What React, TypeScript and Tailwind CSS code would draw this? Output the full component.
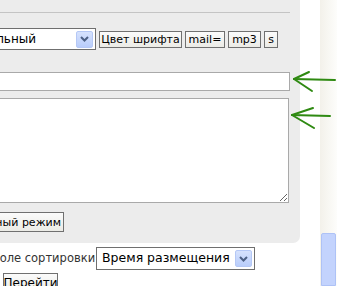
function DropArrow() {
  return (
    <div className="w-[17px] h-[17px] shrink-0 rounded-[2px] bg-gradient-to-b from-[#d6e2fd] to-[#b9cdfb] border border-[#b5c8f6] flex items-center justify-center">
      <svg width="9" height="6" viewBox="0 0 9 6">
        <path d="M1 1 L4.5 4.5 L8 1" fill="none" stroke="#4d6185" strokeWidth="2" />
      </svg>
    </div>
  );
}

function SmallButton({ label, w }: { label: string; w: string }) {
  return (
    <div
      className={`${w} h-[17px] shrink-0 border border-[#707070] bg-gradient-to-b from-[#fbfbfb] to-[#ebebe6] flex items-center justify-center text-[11px] leading-none text-black whitespace-nowrap`}
    >
      {label}
    </div>
  );
}

function Arrow({ tipX, tipY, endX, up, down }: { tipX: number; tipY: number; endX: number; up: [number, number]; down: [number, number] }) {
  return (
    <g stroke="#2f8a12" strokeWidth="2" fill="none" strokeLinecap="round">
      <path d={`M${endX} ${tipY + 1} L${tipX} ${tipY}`} />
      <path d={`M${tipX} ${tipY} L${up[0]} ${up[1]}`} />
      <path d={`M${tipX} ${tipY} L${down[0]} ${down[1]}`} />
    </g>
  );
}

export default function App() {
  return (
    <div className="relative w-[337px] h-[286px] overflow-hidden bg-white flex font-['DejaVu_Sans',Verdana,sans-serif] text-black">
      <div className="w-[320px] flex flex-col">
        <div className="w-[300px] h-[243px] bg-[#ececec] rounded-br-[7px] flex flex-col shrink-0">
          <div className="mt-[12px] w-[290px] h-px bg-[#c4c4c4]" />

          <div className="mt-[15px] flex items-start h-[22px]">
            <div className="ml-[-60px] w-[156px] h-[22px] shrink-0 border border-[#6f6f6f] bg-white flex items-center pr-[2px]">
              <span className="flex-1 text-right pr-[40px] text-[12px] leading-none whitespace-nowrap">Нормальный</span>
              <DropArrow />
            </div>
            <div className="ml-[3px] mt-[3px] flex gap-[3px]">
              <SmallButton label="Цвет шрифта" w="w-[83px]" />
              <SmallButton label="mail=" w="w-[40px]" />
              <SmallButton label="mp3" w="w-[33px]" />
              <SmallButton label="s" w="w-[14px]" />
            </div>
          </div>

          <div className="mt-[22px] ml-[-10px] w-[300px] h-[19px] border border-[#a9a9a9] bg-white shrink-0" />

          <textarea className="mt-[7px] ml-[-10px] w-[299px] h-[105px] border border-[#a9a9a9] bg-white shrink-0 outline-none" />

          <div className="mt-[9px] ml-[-60px] w-[124px] h-[20px] shrink-0 border border-[#707070] bg-gradient-to-b from-[#fbfbfb] to-[#ebebe6] flex items-center justify-end pr-[2px] text-[11px] leading-none whitespace-nowrap">
            Расширенный режим
          </div>
        </div>

        <div className="mt-[4px] flex items-center h-[23px]">
          <span className="ml-[-9px] w-[100px] shrink-0 text-right text-[11.5px] leading-none text-[#333] whitespace-nowrap">Поле сортировки</span>
          <div className="ml-[5px] w-[159px] h-[23px] shrink-0 border border-[#6f6f6f] bg-white flex items-center pl-[5px] pr-[2px]">
            <span className="flex-1 text-[12.5px] leading-none whitespace-nowrap">Время размещения</span>
            <DropArrow />
          </div>
        </div>

        <div className="mt-[3px] ml-[3px] w-[55px] h-[20px] shrink-0 border border-[#707070] bg-gradient-to-b from-[#fbfbfb] to-[#ebebe6] flex items-center justify-center text-[12px] leading-none whitespace-nowrap">
          Перейти
        </div>
      </div>

      <div className="w-[17px] h-full bg-gradient-to-r from-[#f3f1ea] to-[#fdfdfb] flex flex-col">
        <div className="mt-[233px] ml-[1px] w-[15px] flex-1 rounded-t-[2px] bg-[#c3d3fd] border border-[#aec2f6]" />
      </div>

      <svg className="absolute left-0 top-0 pointer-events-none" width="337" height="286">
        <Arrow tipX={294} tipY={79} endX={335} up={[309, 72]} down={[312, 91]} />
        <Arrow tipX={292} tipY={115} endX={330} up={[313, 108]} down={[314, 128]} />
      </svg>
    </div>
  );
}
